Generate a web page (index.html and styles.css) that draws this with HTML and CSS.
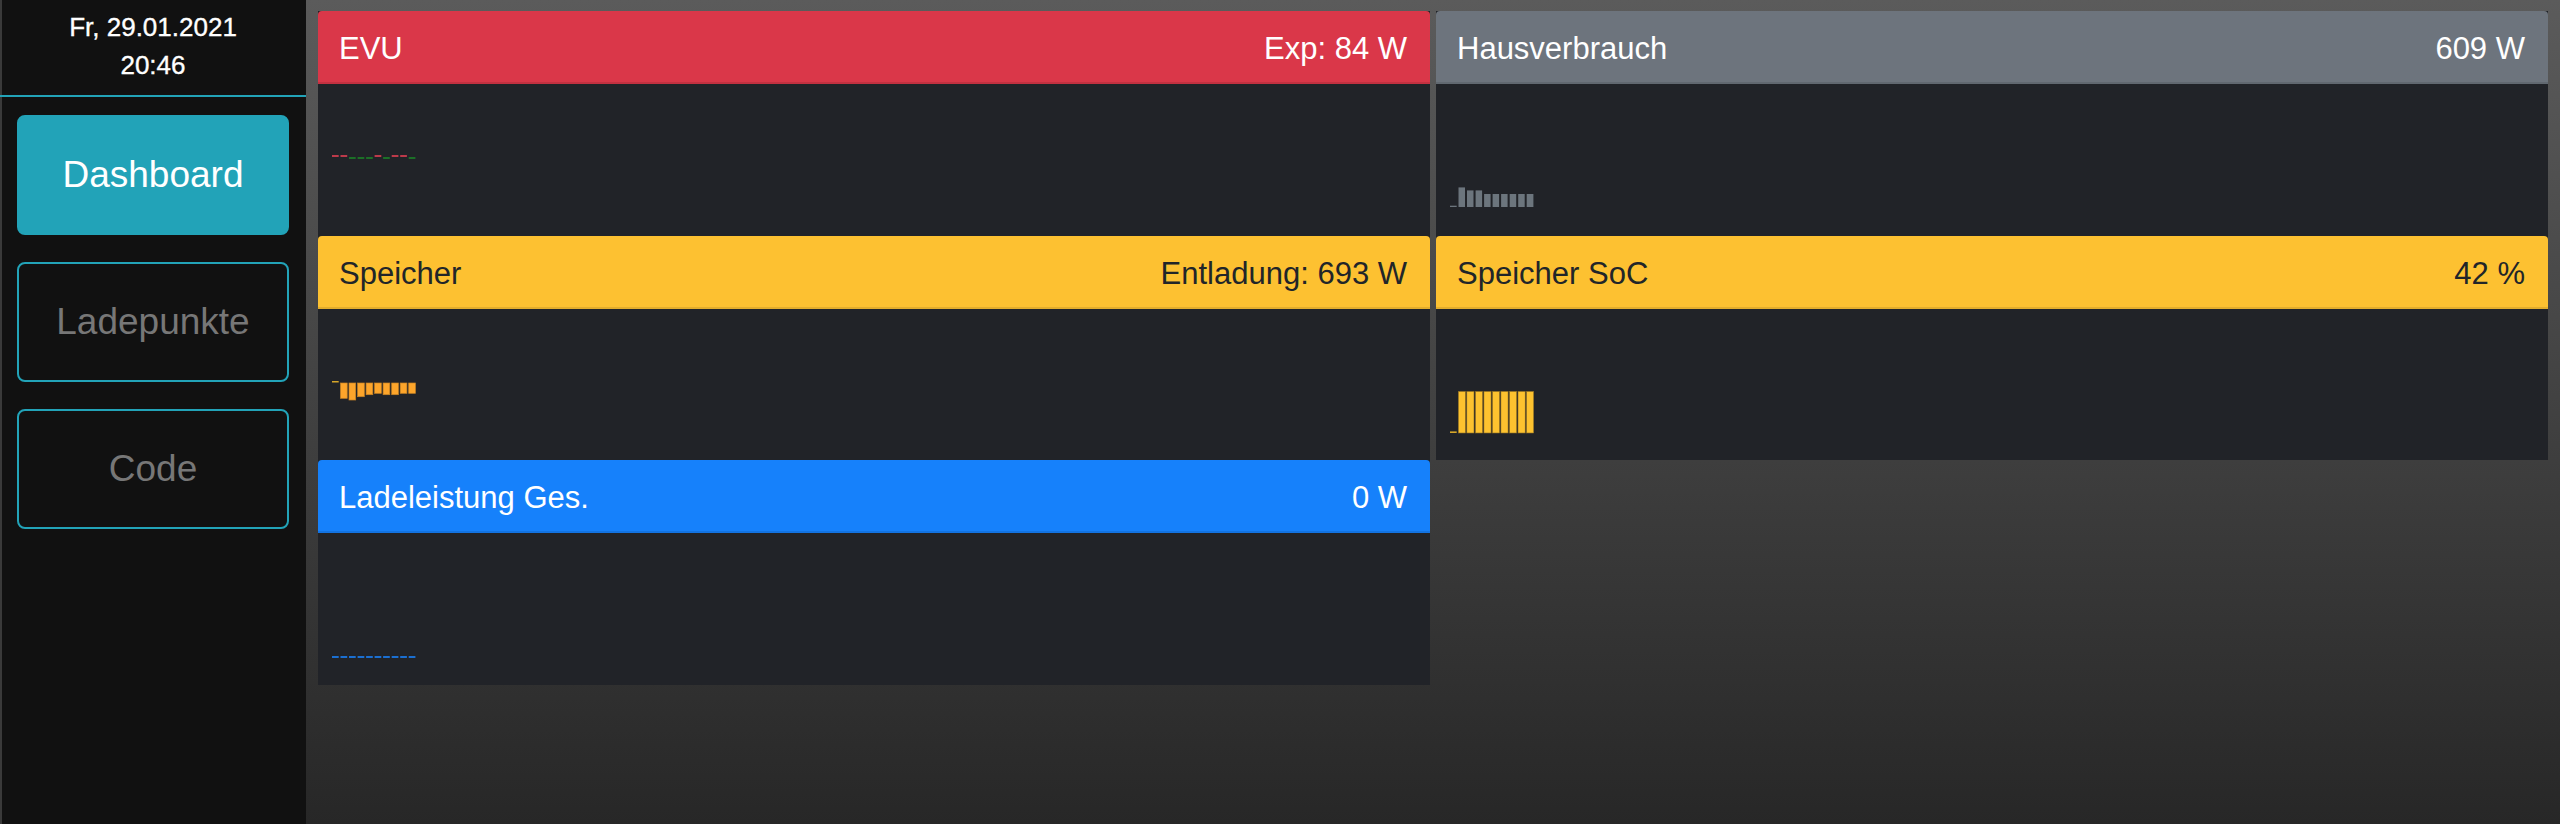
FILE: index.html
```html
<!DOCTYPE html>
<html lang="de">
<head>
<meta charset="utf-8">
<title>Dashboard</title>
<link rel="stylesheet" href="styles.css">
</head>
<body>
<div class="app">
  <nav class="sidebar">
    <div class="clock">
      <div>Fr, 29.01.2021</div>
      <div>20:46</div>
    </div>
    <div class="menu">
      <button class="nav-btn active">Dashboard</button>
      <button class="nav-btn">Ladepunkte</button>
      <button class="nav-btn">Code</button>
    </div>
  </nav>
  <main class="main">
    <div class="col">
      <section class="card">
        <header class="card-header red"><span>EVU</span><span>Exp: 84 W</span></header>
        <div class="card-body">
          <svg class="chart" width="90" height="104" viewBox="0 0 90 104">
            <rect x="0" y="47" width="6.7" height="2" fill="#bd3a4a"/>
            <rect x="8.5" y="47" width="6.7" height="2" fill="#bd3a4a"/>
            <rect x="17" y="49" width="6.7" height="2" fill="#1c6f27"/>
            <rect x="25.6" y="49" width="6.7" height="2" fill="#1c6f27"/>
            <rect x="34.1" y="49" width="6.7" height="2" fill="#1c6f27"/>
            <rect x="42.6" y="47" width="6.7" height="2" fill="#bd3a4a"/>
            <rect x="51.1" y="49" width="6.7" height="2" fill="#1c6f27"/>
            <rect x="59.7" y="47" width="6.7" height="2" fill="#bd3a4a"/>
            <rect x="68.2" y="47" width="6.7" height="2" fill="#bd3a4a"/>
            <rect x="76.7" y="49" width="6.7" height="2" fill="#1c6f27"/>
          </svg>
        </div>
      </section>
      <section class="card">
        <header class="card-header yellow"><span>Speicher</span><span>Entladung: 693 W</span></header>
        <div class="card-body">
          <svg class="chart" width="90" height="104" viewBox="0 0 90 104">
            <rect x="0" y="48" width="6.7" height="1.5" fill="#d6a629"/>
            <g fill="#fda52b" stroke="#c98424" stroke-width="0.7">
              <rect x="8.5" y="50" width="6.7" height="15.3"/>
              <rect x="17" y="50" width="6.7" height="17"/>
              <rect x="25.6" y="50" width="6.7" height="13.7"/>
              <rect x="34.1" y="50" width="6.7" height="11.7"/>
              <rect x="42.6" y="50" width="6.7" height="10.3"/>
              <rect x="51.1" y="50" width="6.7" height="11.7"/>
              <rect x="59.7" y="50" width="6.7" height="11.7"/>
              <rect x="68.2" y="50" width="6.7" height="10.3"/>
              <rect x="76.7" y="50" width="6.7" height="10.3"/>
            </g>
          </svg>
        </div>
      </section>
      <section class="card">
        <header class="card-header blue"><span>Ladeleistung Ges.</span><span>0 W</span></header>
        <div class="card-body">
          <svg class="chart" width="90" height="104" viewBox="0 0 90 104">
            <g fill="#1b6fd1">
              <rect x="0" y="99" width="6.7" height="2"/>
              <rect x="8.5" y="99" width="6.7" height="2"/>
              <rect x="17" y="99" width="6.7" height="2"/>
              <rect x="25.6" y="99" width="6.7" height="2"/>
              <rect x="34.1" y="99" width="6.7" height="2"/>
              <rect x="42.6" y="99" width="6.7" height="2"/>
              <rect x="51.1" y="99" width="6.7" height="2"/>
              <rect x="59.7" y="99" width="6.7" height="2"/>
              <rect x="68.2" y="99" width="6.7" height="2"/>
              <rect x="76.7" y="99" width="6.7" height="2"/>
            </g>
          </svg>
        </div>
      </section>
    </div>
    <div class="col">
      <section class="card">
        <header class="card-header grey"><span>Hausverbrauch</span><span>609 W</span></header>
        <div class="card-body">
          <svg class="chart" width="90" height="104" viewBox="0 0 90 104">
            <g fill="#6c757d">
              <rect x="0" y="97.7" width="6.7" height="1.3"/>
              <rect x="8.5" y="79.4" width="6.5" height="19.6"/>
              <rect x="17" y="82.4" width="6.5" height="16.6"/>
              <rect x="25.6" y="82.4" width="6.5" height="16.6"/>
              <rect x="34.1" y="86" width="6.5" height="13"/>
              <rect x="42.6" y="86" width="6.5" height="13"/>
              <rect x="51.1" y="86" width="6.5" height="13"/>
              <rect x="59.7" y="86" width="6.5" height="13"/>
              <rect x="68.2" y="86" width="6.5" height="13"/>
              <rect x="76.7" y="86" width="6.7" height="13"/>
            </g>
          </svg>
        </div>
      </section>
      <section class="card">
        <header class="card-header yellow"><span>Speicher SoC</span><span>42 %</span></header>
        <div class="card-body">
          <svg class="chart" width="90" height="104" viewBox="0 0 90 104">
            <rect x="0" y="98.4" width="6.7" height="1.6" fill="#d6a629"/>
            <g fill="#fdc22f" stroke="#8a6b22" stroke-width="0.6">
              <rect x="8.3" y="58.4" width="7.2" height="41.6"/>
              <rect x="16.8" y="58.4" width="7.2" height="41.6"/>
              <rect x="25.4" y="58.4" width="7.2" height="41.6"/>
              <rect x="33.9" y="58.4" width="7.2" height="41.6"/>
              <rect x="42.4" y="58.4" width="7.2" height="41.6"/>
              <rect x="50.9" y="58.4" width="7.2" height="41.6"/>
              <rect x="59.5" y="58.4" width="7.2" height="41.6"/>
              <rect x="68" y="58.4" width="7.2" height="41.6"/>
              <rect x="76.5" y="58.4" width="7.2" height="41.6"/>
            </g>
          </svg>
        </div>
      </section>
    </div>
  </main>
</div>
</body>
</html>
```
FILE: styles.css
```css
html, body {
  margin: 0;
  padding: 0;
  height: 100%;
}
body {
  background: linear-gradient(180deg, #5b5b5b 0%, #272727 100%);
  font-family: "Liberation Sans", Arial, sans-serif;
  color: #fff;
  overflow: hidden;
}
.app {
  display: flex;
  height: 824px;
}
.sidebar {
  width: 306px;
  flex: none;
  background: #111111;
  box-shadow: inset 2px 0 0 #3a3a3a;
  display: flex;
  flex-direction: column;
}
.clock {
  padding: 8px 0 11px;
  border-bottom: 2px solid #22a3b8;
  text-align: center;
  font-size: 26px;
  line-height: 38px;
  color: #fff;
  -webkit-text-stroke: 0.35px #fff;
}
.menu {
  display: flex;
  flex-direction: column;
  gap: 27px;
  padding: 18px 17px 0;
}
.nav-btn {
  height: 120px;
  border: 2px solid #22a3b8;
  border-radius: 8px;
  background: transparent;
  color: #777777;
  font-family: "Liberation Sans", Arial, sans-serif;
  font-size: 37px;
  padding: 0;
  cursor: pointer;
}
.nav-btn.active {
  background: #22a3b8;
  color: #fff;
}
.main {
  flex: 1;
  display: grid;
  grid-template-columns: 1fr 1fr;
  column-gap: 6px;
  padding: 11px 12px;
  align-items: start;
}
.col {
  display: flex;
  flex-direction: column;
}
.card {
  background: #212328;
  display: flex;
  flex-direction: column;
}
.card-header {
  display: flex;
  justify-content: space-between;
  height: 73px;
  box-sizing: border-box;
  padding: 20px 23px 16px 21px;
  font-size: 31px;
  line-height: 35px;
  border-bottom: 2px solid rgba(0, 0, 0, 0.1);
  border-radius: 4px 4px 0 0;
  color: #fff;
}
.card-header.red { background: #da3749; }
.card-header.grey { background: #6d747d; }
.card-header.yellow { background: #fdc131; color: #212529; }
.card-header.blue { background: #1681fb; }
.card-body {
  height: 151.7px;
  box-sizing: border-box;
  padding: 24px 14px 0;
}
.chart {
  display: block;
}
```
